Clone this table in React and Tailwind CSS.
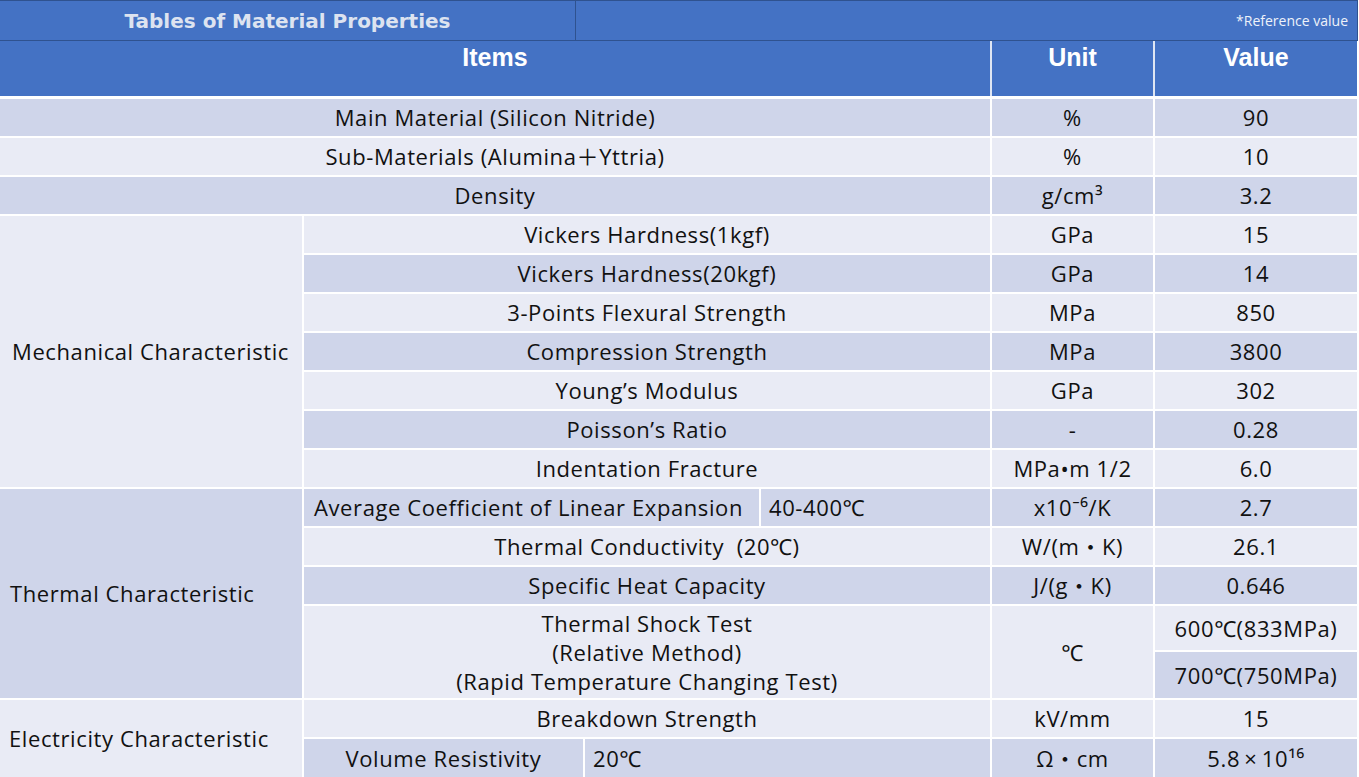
import React from "react";

const D = "bg-[#cfd5ea]";
const L = "bg-[#e9ebf5]";
const cell = "flex items-center justify-center text-[#111] whitespace-nowrap";

export default function App() {
  const body = { fontFamily: "'Open Sans', 'Noto Sans', 'Noto Sans CJK JP', sans-serif" };
  return (
    <div className="w-[1359px] h-[777px] bg-white overflow-hidden" style={body}>
      {/* Title row */}
      <div className="flex h-[41px] w-[1358px] bg-[#4472c4] border-t border-b border-r border-[#2f528f]">
        <div
          className="w-[576px] flex items-center justify-center border-r border-[#2f528f] font-bold text-[#dde3f0]"
          style={{ fontFamily: "'DejaVu Sans', Lato, sans-serif", fontSize: "20px" }}
        >
          Tables of Material Properties
        </div>
        <div className="flex-1 flex items-center justify-end pr-[9px] text-[14px] text-[#eef2fa]">
          *Reference value
        </div>
      </div>

      {/* Header row */}
      <div
        className="grid grid-cols-[302px_279px_174px_229px_161px_202px] gap-x-[2px] h-[55px] bg-[#dfe6f3] w-[1357px]"
        style={{ fontFamily: "'Liberation Sans', Arial, sans-serif" }}
      >
        <div className="col-span-4 bg-[#4472c4] text-white font-bold text-[25px] leading-[29px] text-center pt-[2px]">Items</div>
        <div className="bg-[#4472c4] text-white font-bold text-[25px] leading-[29px] text-center pt-[2px]">Unit</div>
        <div className="bg-[#4472c4] text-white font-bold text-[25px] leading-[29px] text-center pt-[2px]">Value</div>
      </div>

      {/* Body */}
      <div className="mt-[3px] grid grid-cols-[302px_279px_174px_229px_161px_202px] grid-rows-[repeat(13,37px)_44px_46px_37px_38px] gap-[2px] w-[1357px] text-[22px] tracking-[0.6px]">
        <div className={`${cell} ${D} col-span-4`}>Main Material (Silicon Nitride)</div>
        <div className={`${cell} ${D}`}>%</div>
        <div className={`${cell} ${D}`}>90</div>

        <div className={`${cell} ${L} col-span-4`}>Sub-Materials (Alumina＋Yttria)</div>
        <div className={`${cell} ${L}`}>%</div>
        <div className={`${cell} ${L}`}>10</div>

        <div className={`${cell} ${D} col-span-4`}>Density</div>
        <div className={`${cell} ${D}`}>g/cm³</div>
        <div className={`${cell} ${D}`}>3.2</div>

        <div className={`${cell} ${L} row-span-7 !justify-start pl-[12px]`}>Mechanical Characteristic</div>

        <div className={`${cell} ${L} col-span-3`}>Vickers Hardness(1kgf)</div>
        <div className={`${cell} ${L}`}>GPa</div>
        <div className={`${cell} ${L}`}>15</div>

        <div className={`${cell} ${D} col-span-3`}>Vickers Hardness(20kgf)</div>
        <div className={`${cell} ${D}`}>GPa</div>
        <div className={`${cell} ${D}`}>14</div>

        <div className={`${cell} ${L} col-span-3`}>3-Points Flexural Strength</div>
        <div className={`${cell} ${L}`}>MPa</div>
        <div className={`${cell} ${L}`}>850</div>

        <div className={`${cell} ${D} col-span-3`}>Compression Strength</div>
        <div className={`${cell} ${D}`}>MPa</div>
        <div className={`${cell} ${D}`}>3800</div>

        <div className={`${cell} ${L} col-span-3`}>Young’s Modulus</div>
        <div className={`${cell} ${L}`}>GPa</div>
        <div className={`${cell} ${L}`}>302</div>

        <div className={`${cell} ${D} col-span-3`}>Poisson’s Ratio</div>
        <div className={`${cell} ${D}`}>-</div>
        <div className={`${cell} ${D}`}>0.28</div>

        <div className={`${cell} ${L} col-span-3`}>Indentation Fracture</div>
        <div className={`${cell} ${L}`}>MPa•m 1/2</div>
        <div className={`${cell} ${L}`}>6.0</div>

        <div className={`${cell} ${D} row-span-5 !justify-start pl-[10px]`}>Thermal Characteristic</div>

        <div className={`${cell} ${D} col-span-2 !justify-start pl-[10px]`}>Average Coefficient of Linear Expansion</div>
        <div className={`${cell} ${D} !justify-start pl-[8px]`}>40-400℃</div>
        <div className={`${cell} ${D}`}>x10⁻⁶/K</div>
        <div className={`${cell} ${D}`}>2.7</div>

        <div className={`${cell} ${L} col-span-3`}>Thermal Conductivity&nbsp;&nbsp;(20℃)</div>
        <div className={`${cell} ${L}`}>W/(m・K)</div>
        <div className={`${cell} ${L}`}>26.1</div>

        <div className={`${cell} ${D} col-span-3`}>Specific Heat Capacity</div>
        <div className={`${cell} ${D}`}>J/(g・K)</div>
        <div className={`${cell} ${D}`}>0.646</div>

        <div className={`${cell} ${L} col-span-3 row-span-2 flex-col leading-[29px]`}>
          <span>Thermal Shock Test</span>
          <span>(Relative Method)</span>
          <span>(Rapid Temperature Changing Test)</span>
        </div>
        <div className={`${cell} ${L} row-span-2`}>℃</div>
        <div className={`${cell} ${L}`}>600℃(833MPa)</div>
        <div className={`${cell} ${D}`}>700℃(750MPa)</div>

        <div className={`${cell} ${L} row-span-2 !justify-start pl-[9px]`}>Electricity Characteristic</div>

        <div className={`${cell} ${L} col-span-3`}>Breakdown Strength</div>
        <div className={`${cell} ${L}`}>kV/mm</div>
        <div className={`${cell} ${L}`}>15</div>

        <div className={`${cell} ${D}`}>Volume Resistivity</div>
        <div className={`${cell} ${D} col-span-2 !justify-start pl-[8px]`}>20℃</div>
        <div className={`${cell} ${D}`}>Ω・cm</div>
        <div className={`${cell} ${D}`}>5.8{"\u2009×\u2009"}10¹⁶</div>
      </div>
    </div>
  );
}
